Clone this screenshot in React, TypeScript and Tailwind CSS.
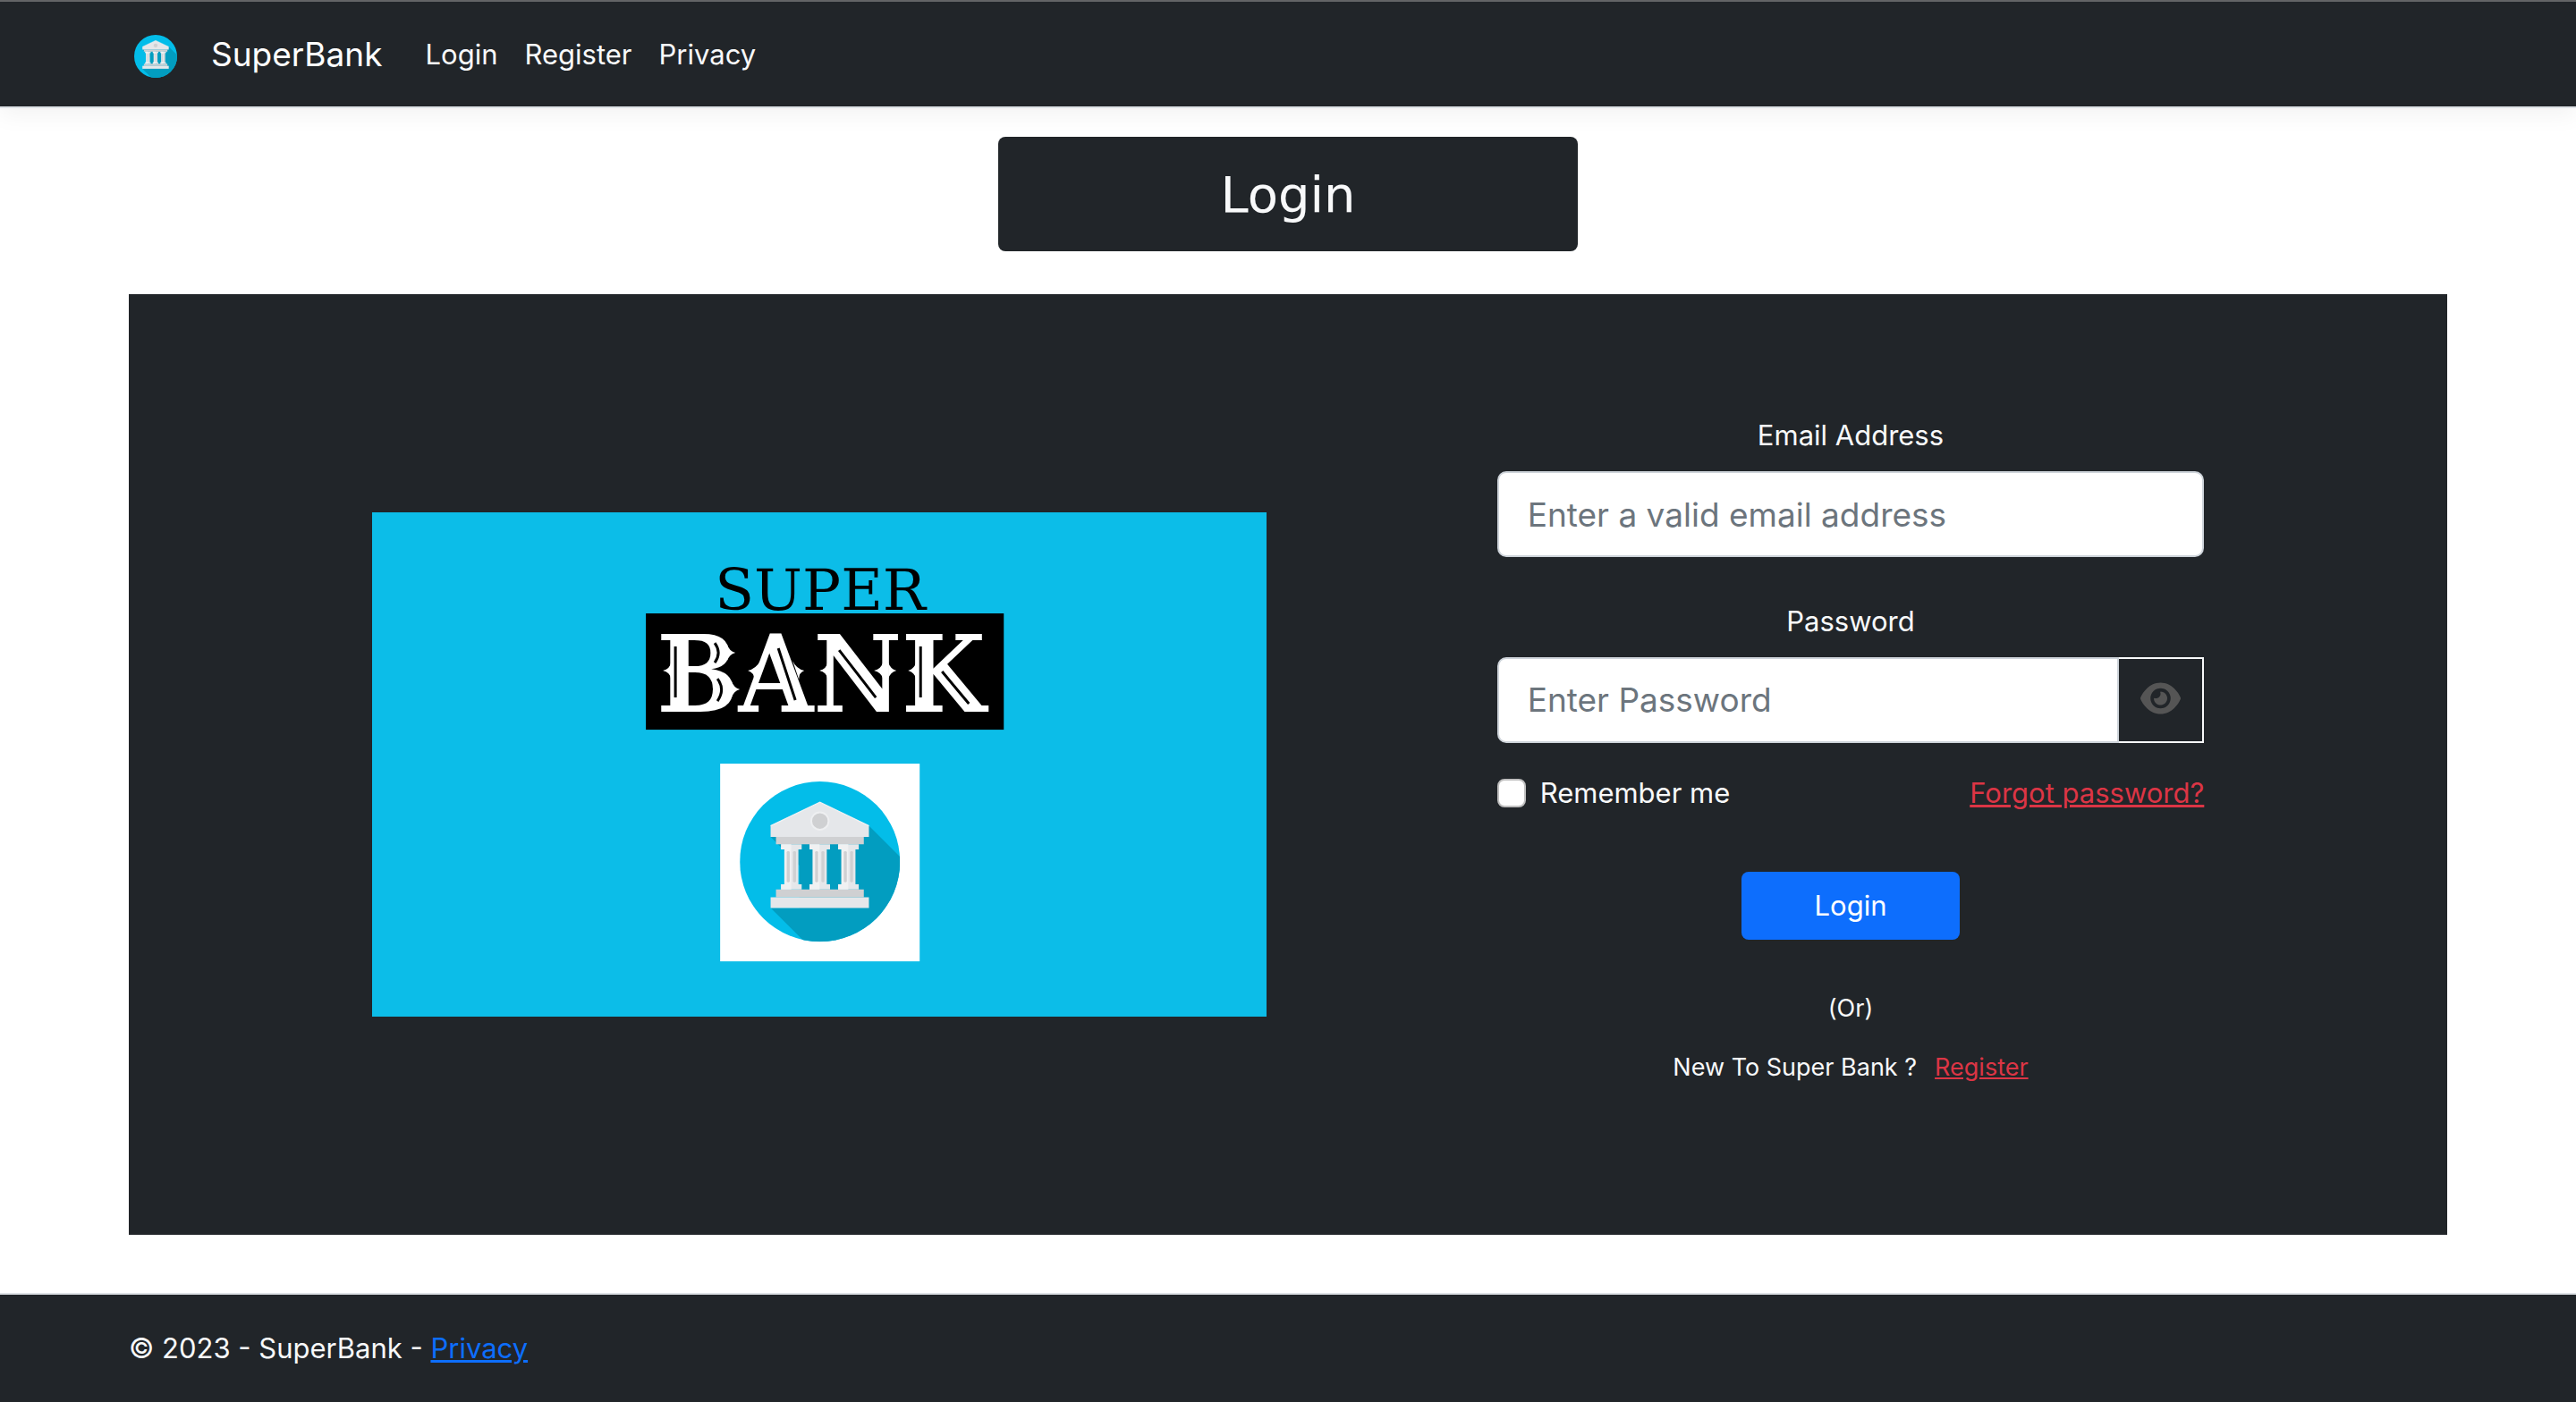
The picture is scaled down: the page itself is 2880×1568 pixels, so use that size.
import { useState } from "react";
import { FaEye } from "react-icons/fa6";

const COLUMN_OFFSETS = [0, 95, 191];

function BankEmblem(props: React.SVGProps<SVGSVGElement>) {
  return (
    <svg viewBox="141 102 536 536" aria-hidden="true" {...props}>
      <clipPath id="emblem-disc">
        <circle cx="409" cy="370" r="268" />
      </clipPath>
      <circle cx="409" cy="370" r="268" fill="#03bde9" />
      <path
        d="M244 287 573 250 800 477V800H520L244 525H340V383Z"
        fill="#029dc0"
        clipPath="url(#emblem-disc)"
      />
      <path d="M262 287H556V312H262Z" fill="#cfd0d2" />
      <path d="M262 463H556V489H262Z" fill="#cfd0d2" />
      <path d="M409 171 573 250V287H244V250Z" fill="#e5e7ea" />
      <path d="M244 250 409 171 573 250" fill="none" stroke="#f0f1f3" strokeWidth="4" />
      <circle cx="409" cy="234" r="29" fill="#cfd0d2" stroke="#eeeff1" strokeWidth="6" />
      <path d="M244 489H573V525H244Z" fill="#e5e7ea" />
      {COLUMN_OFFSETS.map((offset) => (
        <g key={offset} transform={`translate(${offset} 0)`}>
          <path
            d="M279 312H348V329H337V446H348V463H279V446H290V329H279Z"
            fill="#e5e7ea"
          />
          <path d="M279 312H313V463H279V446H290V329H279Z" fill="#f0f1f2" />
          <rect x="298" y="335" width="10" height="104" rx="4" fill="#cfd0d2" />
          <rect x="319" y="335" width="10" height="104" rx="4" fill="#cfd0d2" />
        </g>
      ))}
    </svg>
  );
}

function BankBanner() {
  return (
    <svg
      viewBox="0 0 1000 563"
      role="img"
      aria-label="Super Bank"
      className="block h-auto w-full bg-[#0cbde8]"
    >
      <text
        x="501"
        y="109"
        textAnchor="middle"
        className="fill-black font-['DejaVu_Serif',serif] text-[64px]"
      >
        SUPER
      </text>
      <rect x="306" y="113" width="400" height="130" fill="#000" />
      <text
        x="502"
        y="223"
        textAnchor="middle"
        className="fill-white font-['DejaVu_Serif_Condensed','DejaVu_Serif',serif] text-[120px] font-bold"
      >
        BANK
      </text>
      {/* western-style spurs on the stems */}
      <path
        d="M334 168Q333 175 325 177Q333 179 334 186ZM397 148Q399 155 406 157Q399 159 397 166ZM402 189Q404 196 411 198Q404 200 402 207ZM434 166Q429 175 420 177Q427 179 427 187ZM470 166Q474 175 483 177Q477 179 477 187ZM509 168Q508 175 500 177Q508 179 509 186ZM571 168Q569 175 561 177Q569 179 571 186ZM577 168Q579 175 586 177Q579 179 577 186ZM608 168Q606 175 599 177Q606 179 608 186Z"
        fill="#fff"
      />
      {/* engraved inlines */}
      <path
        d="M339 150V207M383 146Q391 157 383 168M386 186Q395 198 386 211M454 152 473 210M522 154 563 207M613 150V207M637 178 667 214"
        fill="none"
        stroke="#000"
        strokeWidth="3"
      />
      <rect x="389" y="281" width="223" height="221" fill="#fff" />
      <BankEmblem x="411" y="301" width="179" height="179" />
    </svg>
  );
}

export default function App() {
  const [showPassword, setShowPassword] = useState(false);

  return (
    <div className="flex min-h-screen flex-col bg-white font-[Inter,'Liberation_Sans',sans-serif] text-[31px] leading-[48px] text-[#f8f9fa]">
      <header className="border-t-2 border-b-2 border-t-[#636466] border-b-[#dee2e6] bg-[#212529] px-[5%] pt-[29px] pb-7 shadow-[0_8px_24px_rgba(0,0,0,0.05)]">
        <nav className="flex items-center leading-[60px]">
          <a href="#" className="flex items-center gap-8 text-[37px] text-white">
            <span className="px-1.5 pt-1">
              <BankEmblem className="size-12" />
            </span>
            SuperBank
          </a>
          <ul className="ml-12 flex gap-[30px]">
            <li><a href="#login">Login</a></li>
            <li><a href="#register">Register</a></li>
            <li><a href="#privacy">Privacy</a></li>
          </ul>
        </nav>
      </header>

      <main className="grow px-[5%] pt-8 pb-16">
        <h1 className="mx-auto w-1/4 rounded-lg bg-[#212529] pt-[25px] pb-[23px] text-center font-['DejaVu_Sans',sans-serif] text-[56px] leading-[80px]">
          Login
        </h1>

        <section className="mt-12 grid grid-cols-12 items-center bg-[#212529] px-[38px] py-[134px]">
          <div className="col-span-5 col-start-2 px-6">
            <BankBanner />
          </div>

          <form
            className="col-span-4 col-start-8 flex flex-col px-6 pb-8"
            onSubmit={(event) => event.preventDefault()}
          >
            <label htmlFor="email" className="mb-4 text-center">
              Email Address
            </label>
            <input
              id="email"
              type="email"
              placeholder="Enter a valid email address"
              className="h-24 w-full rounded-[10px] border-2 border-[#ced4da] bg-white px-8 text-[37px] text-[#212529] placeholder:text-[#6c757d]"
            />

            <label htmlFor="password" className="mt-12 mb-4 text-center">
              Password
            </label>
            <div className="flex h-24">
              <input
                id="password"
                type={showPassword ? "text" : "password"}
                placeholder="Enter Password"
                className="min-w-0 grow rounded-l-[10px] border-2 border-[#ced4da] bg-white px-8 text-[37px] text-[#212529] placeholder:text-[#6c757d]"
              />
              <button
                type="button"
                aria-label="Show password"
                onClick={() => setShowPassword(!showPassword)}
                className="flex w-[95px] items-center justify-center border-2 border-l-0 border-[#f8f9fa] pb-1 text-[#555]"
              >
                <FaEye className="h-10 w-[45px]" />
              </button>
            </div>

            <div className="mt-8 flex items-center justify-between">
              <label className="flex items-center gap-4">
                <input
                  type="checkbox"
                  className="size-8 appearance-none rounded-lg border-2 border-[#bfbfbf] bg-white checked:bg-[#0d6efd]"
                />
                Remember me
              </label>
              <a href="#forgot" className="text-[#dc3545] underline">
                Forgot password?
              </a>
            </div>

            <button
              type="submit"
              className="mt-16 self-center rounded-lg bg-[#0d6efd] px-[82px] py-3.5 text-white"
            >
              Login
            </button>

            <p className="mt-14 text-center text-[27px] leading-[42px]">(Or)</p>
            <p className="mt-6 flex justify-center gap-5 text-[27px] leading-[42px]">
              New To Super Bank ?
              <a href="#register" className="text-[#dc3545] underline">
                Register
              </a>
            </p>
          </form>
        </section>
      </main>

      <footer className="border-t-2 border-[#dee2e6] bg-[#212529] px-[5%] py-9">
        © 2023 - SuperBank -{" "}
        <a href="#privacy" className="text-[#0d6efd] underline">
          Privacy
        </a>
      </footer>
    </div>
  );
}
